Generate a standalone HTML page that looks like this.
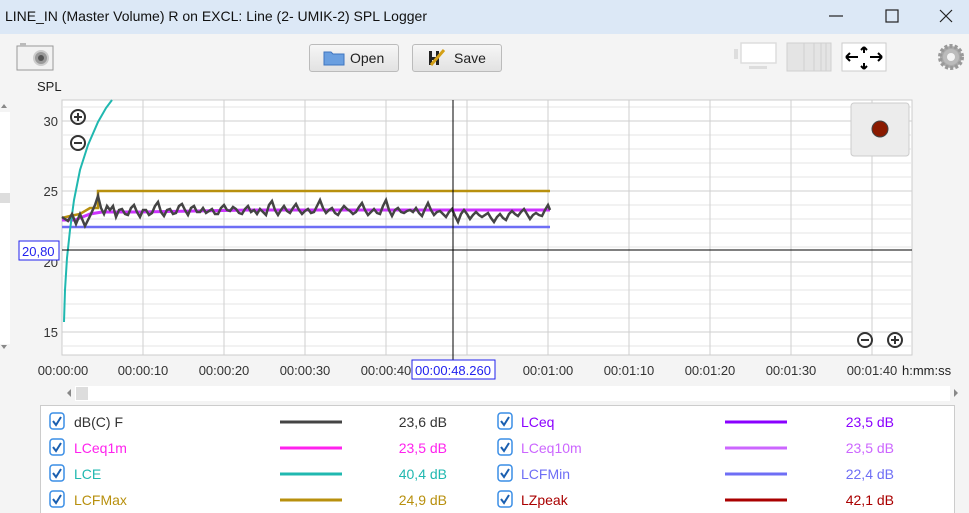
<!DOCTYPE html>
<html><head><meta charset="utf-8"><style>
body{margin:0;width:969px;height:513px;background:#f4f4f4;font-family:"Liberation Sans",sans-serif;overflow:hidden;position:relative}
.title{position:absolute;left:0;top:0;width:969px;height:34px;background:#dce8f6}
.title span{position:absolute;left:5px;top:8px;font-size:14px;color:#111}
.btn{position:absolute;top:44px;height:26px;border:1px solid #bbb;border-radius:3px;background:linear-gradient(#f6f6f6,#e2e2e2);font-size:14px;color:#222}
svg text{font-family:"Liberation Sans",sans-serif}
</style></head><body>
<div class="title"><span>LINE_IN (Master Volume) R on EXCL: Line (2- UMIK-2) SPL Logger</span></div>
<svg width="969" height="34" style="position:absolute;left:0;top:0">
<line x1="829" y1="16" x2="843" y2="16" stroke="#222" stroke-width="1.2"/>
<rect x="886" y="10" width="12" height="12" fill="none" stroke="#222" stroke-width="1.2"/>
<path d="M940 10L952 22M952 10L940 22" stroke="#222" stroke-width="1.2"/>
</svg>
<div class="btn" style="left:309px;width:88px"><svg width="24" height="18" style="position:absolute;left:13px;top:4px"><path d="M1 3h7l2 2h11v11H1z" fill="#6a9fe0" stroke="#3f75c0"/></svg><span style="position:absolute;left:40px;top:5px">Open</span></div>
<div class="btn" style="left:412px;width:88px"><svg width="22" height="20" style="position:absolute;left:14px;top:3px"><path d="M2 3h3v14H2zM9 3h3v14H9zM5 9h4v3H5z" fill="#222"/><path d="M4 17L17 2" stroke="#d4a017" stroke-width="3"/></svg><span style="position:absolute;left:41px;top:5px">Save</span></div>
<svg width="969" height="513" style="position:absolute;left:0;top:0">
<rect x="17" y="46" width="36" height="24" fill="#f2f2f2" stroke="#999"/>
<rect x="20" y="43" width="6" height="3" fill="#bbb"/>
<circle cx="41" cy="58" r="7" fill="#999" stroke="#ccc" stroke-width="2"/><circle cx="41" cy="58" r="3" fill="#555"/>
<rect x="734" y="49" width="4" height="10" fill="#ddd"/>
<rect x="741" y="43" width="35" height="20" fill="#fff" stroke="#ddd" stroke-width="1.5"/>
<rect x="749" y="66" width="18" height="3" fill="#ddd"/>
<rect x="787" y="43" width="44" height="28" fill="#e4e4e4" stroke="#d0d0d0"/>
<path d="M804 43v28M814 43v28M821 43v28M826 43v28" stroke="#d0d0d0"/>
<rect x="842" y="43" width="44" height="28" fill="#fff" stroke="#ccc"/>
<path d="M846 57h12M846 57l4-4M846 57l4 4M882 57h-12M882 57l-4-4M882 57l-4 4M864 47v6M864 47l-3 3M864 47l3 3M864 69v-6M864 69l-3-3M864 69l3-3" stroke="#000" stroke-width="2" fill="none"/>
<circle cx="951" cy="57" r="11" fill="#aaa" stroke="#999" stroke-dasharray="3 2" stroke-width="4"/><circle cx="951" cy="57" r="8" fill="#bbb"/><circle cx="951" cy="57" r="4" fill="#f4f4f4"/>
<text x="37" y="91" font-size="13" fill="#222">SPL</text>
<rect x="0" y="112" width="10" height="232" fill="#fff"/>
<rect x="0" y="193" width="10" height="10" fill="#ddd"/>
<path d="M1 108l3-4 3 4z M1 345l3 4 3-4z" fill="#888"/>
<rect x="62" y="100" width="850" height="255" fill="#fff" stroke="#ccc"/>
<g stroke="#e6e6e6">
<path d="M62 107H912M62 135H912M62 149H912M62 163H912M62 177H912M62 205H912M62 219H912M62 233H912M62 247H912M62 276H912M62 290H912M62 304H912M62 318H912M62 346H912"/>
</g>
<g stroke="#cfcfcf">
<path d="M62 121H912M62 191H912M62 262H912M62 332H912"/>
<path d="M143 100V355M224 100V355M305 100V355M386 100V355M467 100V355M548 100V355M629 100V355M710 100V355M791 100V355M872 100V355"/>
</g>
<g font-size="13" fill="#333" text-anchor="end">
<text x="58" y="126">30</text><text x="58" y="196">25</text><text x="58" y="267">20</text><text x="58" y="337">15</text>
</g>
<path d="M62 227H550" stroke="#6e6ef5" stroke-width="2.5"/>
<path d="M62 218L70 216L80 214L90 208L98 208L98 191L550 191" stroke="#b8900e" stroke-width="2.5" fill="none"/>
<path d="M62 220L75 220L90 214L102 212L140 212L250 210L550 210" stroke="#cc33ff" stroke-width="3" fill="none"/>
<path d="M64 322L65 290L67 258L70 230L74 200L80 170L88 145L98 122L106 108L112 100" stroke="#20b8b0" stroke-width="2" fill="none"/>
<path d="M62 217L68 221L72 214L76 224L80 214L85 226L90 216L95 205L98 196L101 208L104 214L107 206L110 210L113 206L116 217L119 210L122 209L125 214L128 215L131 208L134 205L137 212L140 217L143 210L146 210L149 215L152 213L155 206L158 202L161 212L164 216L167 210L170 209L173 214L176 213L179 206L182 204L185 210L188 215L191 208L194 206L197 212L200 212L203 208L206 213L209 211L212 209L215 214L218 214L221 208L224 205L227 210L230 211L233 207L236 209L239 213L242 214L245 209L248 206L251 212L254 210L257 214L260 209L263 212L266 215L269 205L272 201L275 210L278 215L281 210L284 206L287 211L290 213L293 208L296 204L299 210L302 214L305 211L308 209L311 213L314 212L317 206L320 200L323 208L326 213L329 210L332 208L335 213L338 215L341 210L344 206L347 209L350 211L353 214L356 212L359 207L362 203L365 210L368 215L371 212L374 209L377 213L380 214L383 206L386 200L389 210L392 216L395 210L398 208L401 212L404 213L407 211L410 210L413 212L416 208L419 213L422 216L425 209L428 203L431 210L434 215L437 212L440 211L443 214L446 217L449 212L452 209L455 216L458 222L461 214L464 210L467 214L470 219L473 215L476 212L479 215L482 217L485 215L488 213L491 218L494 222L497 217L500 214L503 218L506 220L509 214L512 211L515 214L518 216L521 212L524 209L527 214L530 219L533 215L536 213L539 215L542 216L545 210L548 205L550 210" stroke="#444" stroke-width="2.5" fill="none"/>
<path d="M453 100V360M62 250H912" stroke="#000" stroke-width="1"/>
<rect x="19" y="241" width="40" height="19" fill="#fff" stroke="#2222ee"/>
<text x="22" y="256" font-size="13" fill="#2222ee">20,80</text>
<g stroke="#333" stroke-width="2" fill="none">
<circle cx="78" cy="117" r="7"/><path d="M74 117h8M78 113v8"/>
<circle cx="78" cy="143" r="7"/><path d="M74 143h8"/>
<circle cx="865" cy="340" r="7"/><path d="M861 340h8"/>
<circle cx="895" cy="340" r="7"/><path d="M891 340h8M895 336v8"/>
</g>
<rect x="851" y="103" width="58" height="53" rx="3" fill="#ececec" stroke="#ccc"/>
<circle cx="880" cy="129" r="8" fill="#8a1a00" stroke="#444"/>
<g font-size="13" fill="#333" text-anchor="middle">
<text x="63" y="375">00:00:00</text><text x="143" y="375">00:00:10</text><text x="224" y="375">00:00:20</text><text x="305" y="375">00:00:30</text><text x="386" y="375">00:00:40</text><text x="548" y="375">00:01:00</text><text x="629" y="375">00:01:10</text><text x="710" y="375">00:01:20</text><text x="791" y="375">00:01:30</text><text x="872" y="375">00:01:40</text>
</g>
<text x="902" y="375" font-size="13" fill="#222">h:mm:ss</text>
<rect x="412" y="360" width="83" height="19" fill="#fff" stroke="#2222ee"/>
<text x="453" y="375" font-size="13" fill="#2222ee" text-anchor="middle">00:00:48.260</text>
<rect x="75" y="386" width="875" height="15" fill="#fff"/>
<rect x="76" y="387" width="12" height="13" fill="#ddd"/>
<path d="M71 389l-4 4 4 4zM954 389l4 4-4 4z" fill="#888"/>
<rect x="40.5" y="405.5" width="914" height="110" fill="#fff" stroke="#ccc"/>
<g font-size="14">
<g fill="none" stroke-width="1.5">
<g stroke="#3a8ee6"><rect x="50" y="413" width="14" height="16" rx="3"/><rect x="50" y="439" width="14" height="16" rx="3"/><rect x="50" y="465" width="14" height="16" rx="3"/><rect x="50" y="491" width="14" height="16" rx="3"/><rect x="498" y="413" width="14" height="16" rx="3"/><rect x="498" y="439" width="14" height="16" rx="3"/><rect x="498" y="465" width="14" height="16" rx="3"/><rect x="498" y="491" width="14" height="16" rx="3"/></g>
<g stroke="#1a5fb0" stroke-width="2"><path d="M53 421l3 4 5-8M53 447l3 4 5-8M53 473l3 4 5-8M53 499l3 4 5-8M501 421l3 4 5-8M501 447l3 4 5-8M501 473l3 4 5-8M501 499l3 4 5-8"/></g>
</g>
<g stroke-width="3">
<path d="M280 422h62" stroke="#444"/><path d="M280 448h62" stroke="#ff22ee"/><path d="M280 474h62" stroke="#20b8b0"/><path d="M280 500h62" stroke="#b8900e"/>
<path d="M725 422h62" stroke="#8a00ff"/><path d="M725 448h62" stroke="#cc66ff"/><path d="M725 474h62" stroke="#6e6ef5"/><path d="M725 500h62" stroke="#aa0000"/>
</g>
<text x="74" y="427" fill="#333">dB(C) F</text><text x="447" y="427" fill="#333" text-anchor="end">23,6 dB</text>
<text x="74" y="453" fill="#ff22ee">LCeq1m</text><text x="447" y="453" fill="#ff22ee" text-anchor="end">23,5 dB</text>
<text x="74" y="479" fill="#20b8b0">LCE</text><text x="447" y="479" fill="#20b8b0" text-anchor="end">40,4 dB</text>
<text x="74" y="505" fill="#b8900e">LCFMax</text><text x="447" y="505" fill="#b8900e" text-anchor="end">24,9 dB</text>
<text x="521" y="427" fill="#8a00ff">LCeq</text><text x="894" y="427" fill="#8a00ff" text-anchor="end">23,5 dB</text>
<text x="521" y="453" fill="#cc66ff">LCeq10m</text><text x="894" y="453" fill="#cc66ff" text-anchor="end">23,5 dB</text>
<text x="521" y="479" fill="#6e6ef5">LCFMin</text><text x="894" y="479" fill="#6e6ef5" text-anchor="end">22,4 dB</text>
<text x="521" y="505" fill="#aa0000">LZpeak</text><text x="894" y="505" fill="#aa0000" text-anchor="end">42,1 dB</text>
</g>
</svg>
</body></html>
